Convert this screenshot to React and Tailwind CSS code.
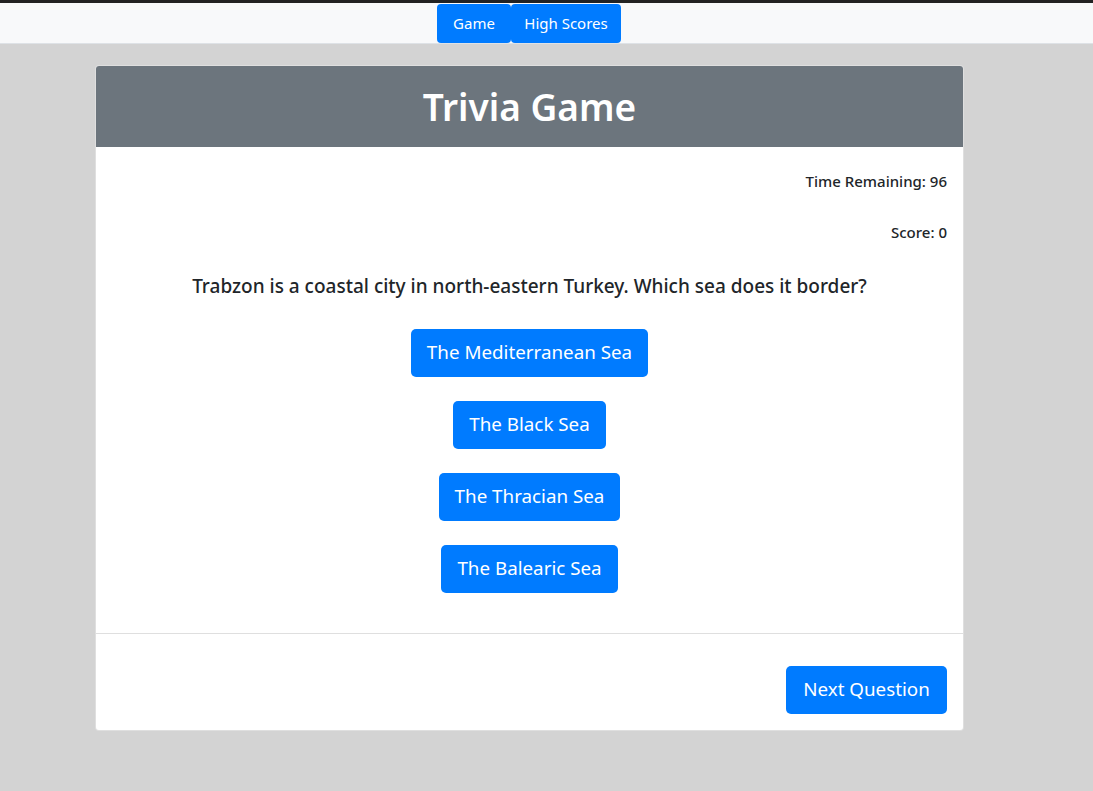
export default function App() {
  const font = { fontFamily: '"Segoe UI", "Noto Sans", "Open Sans", sans-serif' };
  const answers = ["The Mediterranean Sea", "The Black Sea", "The Thracian Sea", "The Balearic Sea"];
  return (
    <div className="min-h-[791px] bg-[#d3d3d3] font-['Segoe_UI','Noto_Sans',sans-serif]" style={font}>
      <div className="h-[3px] bg-[#222]" />
      <div className="border-b border-[#dee2e6] bg-[#f8f9fa]">
        <nav className="flex h-[40px] w-[1058px] justify-center pt-px">
          <button className="h-[39px] w-[74px] rounded bg-[#007bff] text-[15px] text-white">Game</button>
          <button className="h-[39px] w-[110px] rounded bg-[#007bff] text-[15px] text-white">High Scores</button>
        </nav>
      </div>
      <div className="w-[1059px]">
        <div className="mx-auto mt-[21px] w-[869px] overflow-hidden rounded border border-[rgba(0,0,0,0.125)] bg-white">
          <div className="flex h-[81px] items-center justify-center bg-[#6c757d]">
            <h1 className="text-[37px] font-semibold text-white">Trivia Game</h1>
          </div>
          <div className="px-4">
            <p className="mt-[23px] text-right text-[15px] font-medium text-[#212529]">Time Remaining: 96</p>
            <p className="mt-[28px] text-right text-[15px] font-medium text-[#212529]">Score: 0</p>
            <p className="mt-[29px] text-center text-[19px] font-medium text-[#212529]">
              Trabzon is a coastal city in north-eastern Turkey. Which sea does it border?
            </p>
            <div className="mt-[28px] flex flex-col items-center gap-6 pb-[40px]">
              {answers.map((a) => (
                <button key={a} className="h-12 rounded-[5px] bg-[#007bff] px-4 text-[18.8px] text-white">
                  {a}
                </button>
              ))}
            </div>
          </div>
          <div className="flex justify-end border-t border-[rgba(0,0,0,0.125)] px-4 pb-4 pt-[32px]">
            <button className="h-12 w-[161px] rounded-[5px] bg-[#007bff] text-[18.8px] text-white">Next Question</button>
          </div>
        </div>
      </div>
    </div>
  );
}
